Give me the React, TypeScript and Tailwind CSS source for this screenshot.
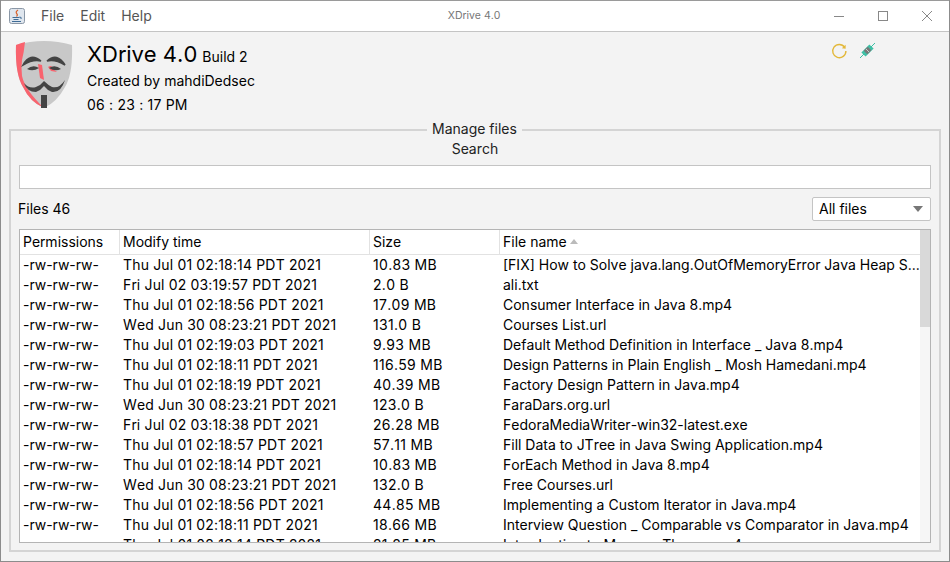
const rows: [string, string, string, string][] = [
  ["-rw-rw-rw-", "Thu Jul 01 02:18:14 PDT 2021", "10.83 MB", "[FIX] How to Solve java.lang.OutOfMemoryError Java Heap S..."],
  ["-rw-rw-rw-", "Fri Jul 02 03:19:57 PDT 2021", "2.0 B", "ali.txt"],
  ["-rw-rw-rw-", "Thu Jul 01 02:18:56 PDT 2021", "17.09 MB", "Consumer Interface in Java 8.mp4"],
  ["-rw-rw-rw-", "Wed Jun 30 08:23:21 PDT 2021", "131.0 B", "Courses List.url"],
  ["-rw-rw-rw-", "Thu Jul 01 02:19:03 PDT 2021", "9.93 MB", "Default Method Definition in Interface _ Java 8.mp4"],
  ["-rw-rw-rw-", "Thu Jul 01 02:18:11 PDT 2021", "116.59 MB", "Design Patterns in Plain English _ Mosh Hamedani.mp4"],
  ["-rw-rw-rw-", "Thu Jul 01 02:18:19 PDT 2021", "40.39 MB", "Factory Design Pattern in Java.mp4"],
  ["-rw-rw-rw-", "Wed Jun 30 08:23:21 PDT 2021", "123.0 B", "FaraDars.org.url"],
  ["-rw-rw-rw-", "Fri Jul 02 03:18:38 PDT 2021", "26.28 MB", "FedoraMediaWriter-win32-latest.exe"],
  ["-rw-rw-rw-", "Thu Jul 01 02:18:57 PDT 2021", "57.11 MB", "Fill Data to JTree in Java Swing Application.mp4"],
  ["-rw-rw-rw-", "Thu Jul 01 02:18:14 PDT 2021", "10.83 MB", "ForEach Method in Java 8.mp4"],
  ["-rw-rw-rw-", "Wed Jun 30 08:23:21 PDT 2021", "132.0 B", "Free Courses.url"],
  ["-rw-rw-rw-", "Thu Jul 01 02:18:56 PDT 2021", "44.85 MB", "Implementing a Custom Iterator in Java.mp4"],
  ["-rw-rw-rw-", "Thu Jul 01 02:18:11 PDT 2021", "18.66 MB", "Interview Question _ Comparable vs Comparator in Java.mp4"],
  ["-rw-rw-rw-", "Thu Jul 01 02:18:14 PDT 2021", "21.85 MB", "Introduction to Memory Theme.mp4"],
];

function Mask() {
  return (
    <svg width="58" height="70" viewBox="0 0 58 70" className="shrink-0">
      <path d="M1 5 Q29 -3 57 5 Q58 34 50 47 Q42 62 29 68 Q15 62 8 47 Q0 34 1 5Z" fill="#c8c8c8" />
      <path d="M1 5 Q6 3 10 2 Q9 12 7 20 Q6 28 7 36 Q10 50 29 68 Q15 62 8 47 Q0 34 1 5Z" fill="#f9636e" />
      <path d="M23 24 L27 25 L29 40 L25 38Z" fill="#f9636e" />
      <path d="M33 27 Q37 24 38 29 L42 32 L36 31Z" fill="#f9636e" />
      <path d="M8 25 Q15 12 26 21 Q18 19 8 25Z" fill="#444" stroke="#444" strokeWidth="1.5" />
      <path d="M32 21 Q42 12 50 25 Q40 19 32 21Z" fill="#444" stroke="#444" strokeWidth="1.5" />
      <path d="M12 29 Q18 24 24 28 Q18 32 12 29Z" fill="#444" />
      <path d="M34 28 Q40 24 46 29 Q40 32 34 28Z" fill="#444" />
      <path d="M9 43 Q14 49 21 47 Q26 45 29 41 Q33 45 37 47 Q44 49 50 40 Q46 53 37 52 Q32 50 29 46 Q26 50 21 52 Q12 52 9 43Z" fill="#444" />
      <rect x="26" y="55" width="6" height="13" fill="#444" />
    </svg>
  );
}

function JavaIcon() {
  return (
    <svg width="16" height="16" viewBox="0 0 16 16">
      <rect x="0.5" y="0.5" width="15" height="15" rx="2" fill="#dfe6ee" stroke="#8a97a6" />
      <path d="M9 2 Q6 4 8 6 Q9 7 7.5 8.5" stroke="#d9622b" strokeWidth="1.3" fill="none" />
      <path d="M3.5 9.5 H10.5 M4.5 11.5 H9.5 M3 13.5 H12" stroke="#3f6c96" strokeWidth="1.1" />
      <path d="M10.5 9 Q13 9 12 11" stroke="#3f6c96" fill="none" />
    </svg>
  );
}

export default function App() {
  return (
    <div className="flex h-[562px] w-[950px] flex-col overflow-hidden border-x border-[#8c8c8c] bg-[#f3f3f3] text-[14px] text-black [font-kerning:none] [font-family:'Inter',sans-serif]">
      <div className="flex h-[32px] shrink-0 items-center border-y border-t-[#9a9a9a] border-b-[#c4c4c4] bg-white">
        <div className="ml-[8px]"><JavaIcon /></div>
        <div className="ml-[16px] flex gap-[16px] text-[#555]">
          <span className="-translate-y-px">File</span>
          <span className="-translate-y-px">Edit</span>
          <span className="-translate-y-px">Help</span>
        </div>
        <div className="flex-1 pl-[296px] text-[10.5px] text-[#777]">XDrive 4.0</div>
        <div className="flex items-center gap-[34px] pr-[17px]">
          <svg width="10" height="10" viewBox="0 0 10 10"><path d="M0 5.5 H10" stroke="#888" /></svg>
          <svg width="10" height="10" viewBox="0 0 10 10"><rect x="0.5" y="0.5" width="9" height="9" fill="none" stroke="#888" /></svg>
          <svg width="10" height="10" viewBox="0 0 10 10"><path d="M0 0 L10 10 M10 0 L0 10" stroke="#888" /></svg>
        </div>
      </div>

      <div className="flex h-[97px] shrink-0 px-[14px] pt-[8px]">
        <Mask />
        <div className="ml-[14px] flex flex-col">
          <div className="flex items-baseline gap-[5px] leading-[28px]">
            <span className="text-[22px]">XDrive 4.0</span>
            <span>Build 2</span>
          </div>
          <div className="leading-[20px]">Created by mahdiDedsec</div>
          <div className="mt-[4px] leading-[20px] tracking-[0.2px]">06 : 23 : 17 PM</div>
        </div>
        <div className="ml-auto mr-[60px] mt-[2px] flex gap-[12px]">
          <svg width="17" height="18" viewBox="0 0 18 18" fill="none">
            <path d="M14.5 5 A7 7 0 1 0 15.8 9" stroke="#e3b83a" strokeWidth="1.5" />
            <path d="M11.5 6 L15.5 6.5 L15.5 2.5Z" fill="#e3b83a" />
          </svg>
          <svg width="15" height="15" viewBox="0 0 15 15" className="mt-px">
            <path d="M0 15 L15 0" stroke="#3dbfa5" />
            <path d="M3.5 11.5 L11.5 3.5" stroke="#3dbfa5" strokeWidth="6" />
            <path d="M5.5 9.5 L9.5 5.5" stroke="#777" strokeWidth="5" />
            <path d="M6 6 L9 9" stroke="#ccc" />
          </svg>
        </div>
      </div>

      <div className="relative mx-[8px] flex h-[423px] shrink-0 flex-col border-2 border-[#d4d4d4] px-[8px]">
        <div className="absolute -top-[12px] left-[416px] bg-[#f3f3f3] px-[5px] leading-[20px] text-[#222]">Manage files</div>
        <div className="mt-[8px] text-center leading-[20px] text-[#222]">Search</div>
        <div className="mt-[6px] h-[24px] shrink-0 border border-[#c4c4c4] bg-white" />
        <div className="mt-[8px] flex h-[24px] shrink-0 items-center justify-between">
          <span className="-ml-px -translate-y-px">Files 46</span>
          <div className="flex h-[24px] w-[119px] items-center justify-between rounded-[2px] border border-[#c4c4c4] bg-white pl-[6px] pr-[7px]">
            <span className="-translate-y-px">All files</span>
            <span className="h-0 w-0 border-x-[5px] border-t-[6px] border-x-transparent border-t-[#777]" />
          </div>
        </div>
        <div className="mt-[8px] flex h-[314px] shrink-0 overflow-hidden border border-[#b4b4b4] bg-white">
          <div className="min-w-0 flex-1">
            <div className="flex h-[25px] items-center border-b border-[#e2e2e2]">
              <div className="h-full w-[100px] border-r border-[#e2e2e2] pl-[3px] leading-[24px]">Permissions</div>
              <div className="h-full w-[250px] border-r border-[#e2e2e2] pl-[3px] leading-[24px]">Modify time</div>
              <div className="h-full w-[130px] border-r border-[#e2e2e2] pl-[3px] leading-[24px]">Size</div>
              <div className="flex h-full flex-1 gap-[3px] pl-[3px] leading-[24px]">
                File name
                <span className="mt-[9px] h-0 w-0 border-x-[4px] border-b-[5px] border-x-transparent border-b-[#bbb]" />
              </div>
            </div>
            {rows.map((r, i) => (
              <div key={i} className="flex h-[20px] items-center whitespace-nowrap leading-[20px]">
                <div className="w-[100px] pl-[3px]">{r[0]}</div>
                <div className="w-[250px] pl-[3px] tracking-[0.16px]">{r[1]}</div>
                <div className="w-[130px] pl-[3px] tracking-[0.3px]">{r[2]}</div>
                <div className="min-w-0 flex-1 overflow-hidden pl-[3px]">{r[3]}</div>
              </div>
            ))}
          </div>
          <div className="flex w-[10px] shrink-0 flex-col bg-[#f6f6f6]">
            <div className="h-[97px] bg-[#d9d9d9]" />
          </div>
        </div>
      </div>
      <div className="flex-1 border-b border-[#8c8c8c]" />
    </div>
  );
}
